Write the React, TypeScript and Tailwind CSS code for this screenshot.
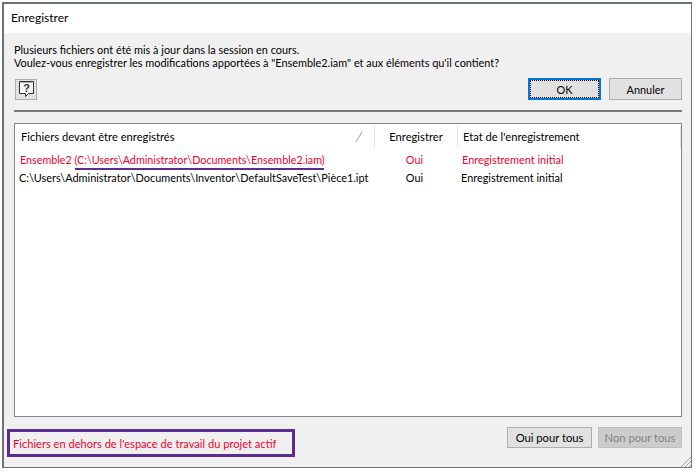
function HelpIcon() {
  return (
    <svg width="15" height="17" viewBox="0 0 15 17" fill="none">
      <path d="M0.5 0.5H14.5V12.5H9.5L6.5 15.5V12.5H0.5Z" fill="#f8f8f8" stroke="#333333" />
      <path d="M1.5 1.5H13.5" stroke="#a9a9a9" />
      <text x="7.5" y="10.5" textAnchor="middle" fontSize="11" fontWeight="700" fill="#333333" fontFamily="'Liberation Sans', sans-serif">
        ?
      </text>
    </svg>
  );
}

const rows = [
  {
    name: "Ensemble2 (C:\\Users\\Administrator\\Documents\\Ensemble2.iam)",
    save: "Oui",
    state: "Enregistrement initial",
    red: true,
  },
  {
    name: "C:\\Users\\Administrator\\Documents\\Inventor\\DefaultSaveTest\\Pièce1.ipt",
    save: "Oui",
    state: "Enregistrement initial",
    red: false,
  },
];

export default function App() {
  return (
    <div className="h-[472px] w-[697px] bg-white pt-[2px] pl-[2px] font-['Lato','Liberation_Sans',sans-serif] text-[10.9px] leading-[13px] text-black">
      <div className="relative flex h-[466px] w-[690px] flex-col border border-t-2 border-l-2 border-[#6d7179] bg-[#f0f0f0]">
        <div className="flex h-[29px] shrink-0 items-center bg-white pb-[2px] pl-[7px] text-[12px]">Enregistrer</div>

        <div className="flex flex-1 flex-col pt-[10px] pr-[9px] pl-[10px]">
          <p>
            Plusieurs fichiers ont été mis à jour dans la session en cours.
            <br />
            Voulez-vous enregistrer les modifications apportées à "Ensemble2.iam" et aux éléments qu'il contient?
          </p>

          <div className="mt-[9px] flex items-center justify-between">
            <button className="ml-[1px] flex h-[21px] w-[22px] items-center justify-center border border-[#adadad] bg-[#e1e1e1]">
              <HelpIcon />
            </button>
            <div className="flex gap-[8px]">
              <button className="flex h-[22px] w-[73px] items-center justify-center border-2 border-[#0078d7] bg-[#e1e1e1] outline-1 -outline-offset-3 outline-black outline-dotted">
                OK
              </button>
              <button className="flex h-[22px] w-[73px] items-center justify-center border border-[#adadad] bg-[#e1e1e1]">
                Annuler
              </button>
            </div>
          </div>

          <div className="mt-[10px] h-[2px] bg-[#7a7a7a]" />

          <div className="mt-[11px] h-[294px] border border-[#82878f] bg-white">
            <div className="flex h-[24px] items-center pt-[1px] text-[11.2px]">
              <div className="relative flex h-[22px] w-[360px] items-center border-r border-[#e3e3e3] pl-[6px]">
                Fichiers devant être enregistrés
                <svg className="absolute top-[6px] right-[11px]" width="8" height="10" viewBox="0 0 8 10">
                  <path d="M1 10L7 0" stroke="#9a9a9a" />
                </svg>
              </div>
              <div className="flex h-[22px] w-[83px] items-center justify-center border-r border-[#e3e3e3]">Enregistrer</div>
              <div className="flex h-[22px] flex-1 items-center border-r border-[#e3e3e3] pl-[5px]">Etat de l'enregistrement</div>
            </div>
            <div className="mt-[2px]">
              {rows.map((row) => (
                <div key={row.name} className={`flex h-[18px] items-center ${row.red ? "text-[#f5002e]" : ""}`}>
                  <div className={`w-[360px] whitespace-nowrap ${row.red ? "relative pl-[5px] text-[10.75px]" : "pl-[4px]"}`}>
                    {row.name}
                    {row.red && <span className="absolute top-[15px] left-[60px] h-[2px] w-[249px] bg-[#5c2d91]" />}
                  </div>
                  <div className="w-[79px] text-center">{row.save}</div>
                  <div className={row.red ? "pl-[8px]" : "pl-[7px]"}>{row.state}</div>
                </div>
              ))}
            </div>
          </div>

          <div className="mt-[10px] flex items-start justify-between">
            <div className="mt-[2px] -ml-[7px] flex h-[28px] w-[288px] items-center border-[3px] border-[#5c2d91] pl-[3px] text-[11.1px] text-[#f5002e]">
              Fichiers en dehors de l'espace de travail du projet actif
            </div>
            <div className="flex gap-[6px] text-[11.2px]">
              <button className="flex h-[21px] w-[85px] items-center justify-center border border-[#adadad] bg-[#e1e1e1]">
                Oui pour tous
              </button>
              <button className="flex h-[21px] w-[84px] items-center justify-center border border-[#bfbfbf] bg-[#cccccc] text-[#838383]">
                Non pour tous
              </button>
            </div>
          </div>
        </div>

        <svg className="absolute right-0 bottom-0" width="11" height="11" viewBox="0 0 11 11">
          <path d="M1 11L11 1M5 11L11 5M9 11L11 9" stroke="#a0a0a0" />
        </svg>
      </div>
    </div>
  );
}
